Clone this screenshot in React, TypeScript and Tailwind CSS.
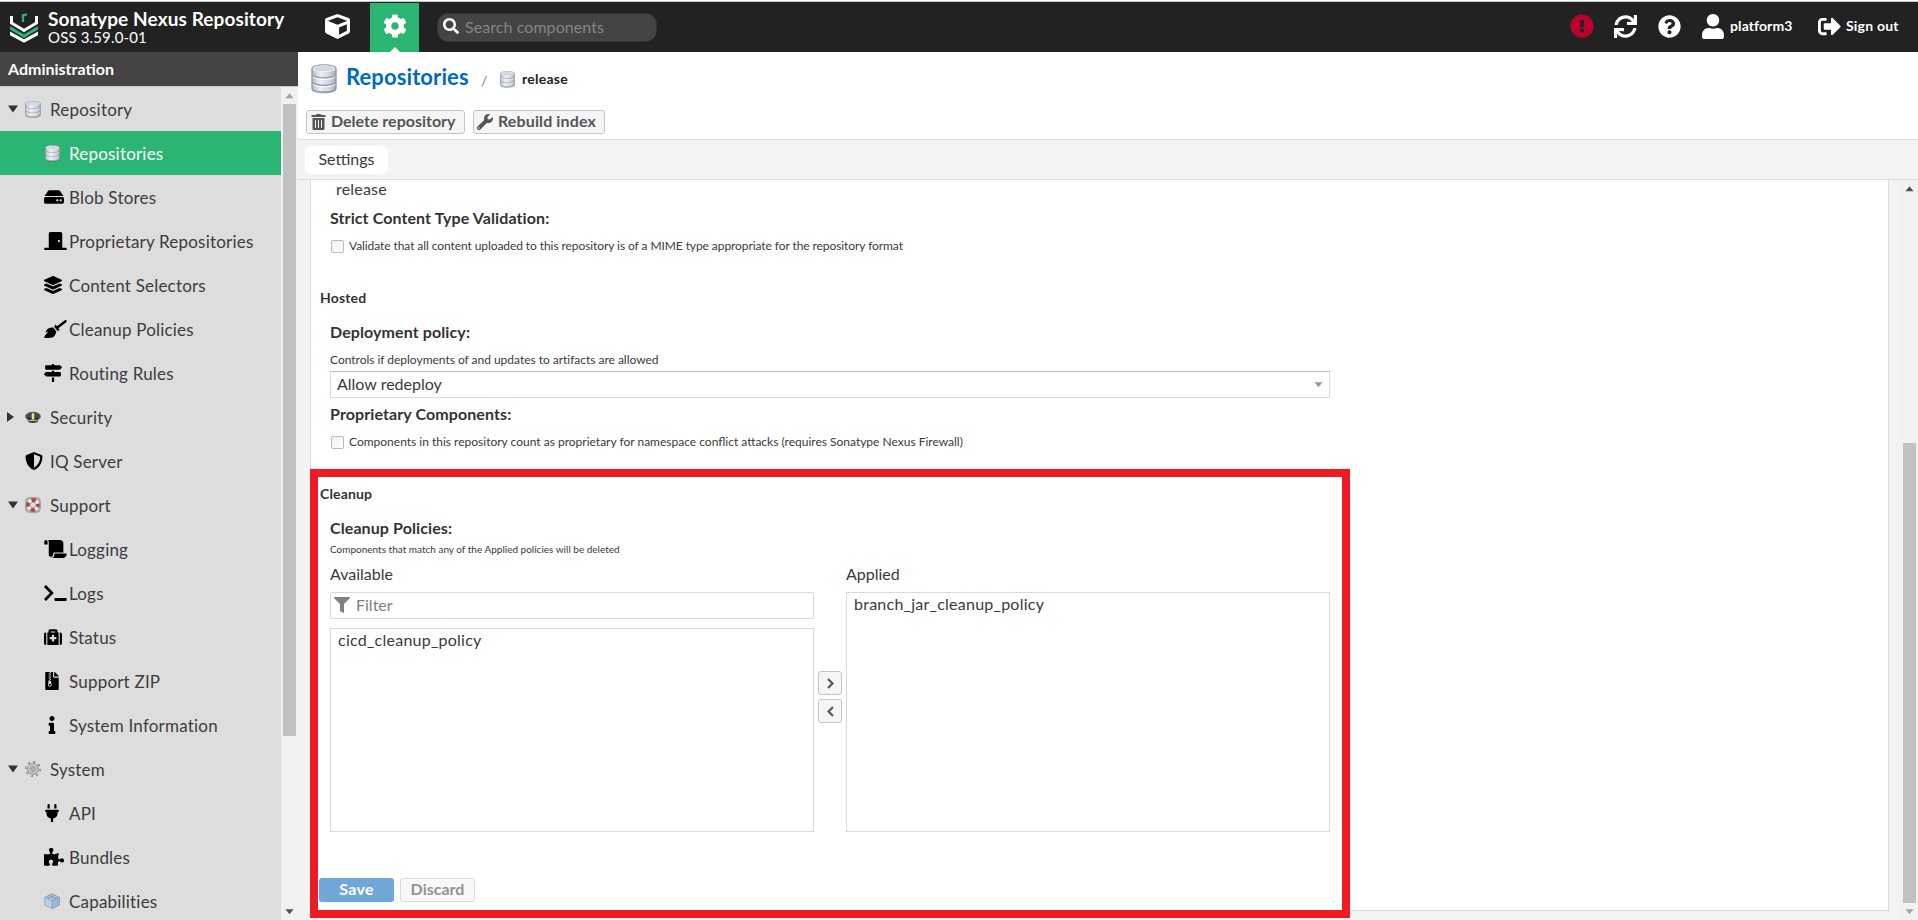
import React from 'react';
import clsx from 'clsx';
import type { IconType } from 'react-icons';
import {
  FaBroom, FaCog, FaCube, FaDoorClosed, FaExclamationCircle, FaFileArchive, FaFilter, FaHdd, FaInfo,
  FaLayerGroup, FaMapSigns, FaMedkit, FaPlug, FaPuzzlePiece, FaQuestionCircle, FaScroll, FaSearch,
  FaShieldAlt, FaSignOutAlt, FaSync, FaTerminal, FaTrashAlt, FaUser, FaWrench,
} from 'react-icons/fa';

function Logo() {
  return (
    <svg viewBox="0 0 28 30" className="h-[30px] w-7 shrink-0" fill="none">
      <path d="M1.500 3v7L14 17.500l12.500-7.500V3" stroke="#fff" strokeWidth="3" />
      <path d="M0 13v3.600L14 25l14-8.400V13L14 21.400z" fill="#2ab573" />
      <path d="M0 18.600v3.600l14 7.600 14-7.600v-3.600l-14 7.600z" fill="#fff" />
      <path d="M13 9V1M13 4c.4-2 2-2.600 4-2.300" stroke="#2ab573" strokeWidth="2.200" />
    </svg>
  );
}

function DatabaseIcon({ className }: { className?: string }) {
  return (
    <svg viewBox="0 0 26 30" className={className} preserveAspectRatio="none">
      <defs>
        <linearGradient id="drum" x1="0" x2="1" y1="0" y2="0">
          <stop offset="0" stopColor="#b4bbc6" />
          <stop offset=".35" stopColor="#eceff4" />
          <stop offset=".75" stopColor="#cdd2db" />
          <stop offset="1" stopColor="#a3aab6" />
        </linearGradient>
      </defs>
      <ellipse cx="13" cy="26.500" rx="12" ry="3" fill="#000" opacity=".25" />
      <path d="M1 4.500C1 2.500 6 1 13 1s12 1.500 12 3.500v20c0 2-5 3.500-12 3.500S1 26.500 1 24.500z" fill="url(#drum)" stroke="#8f97a3" strokeWidth="1.300" />
      <ellipse cx="13" cy="4.700" rx="11" ry="3" fill="#cfd6df" stroke="#f5f7fa" strokeWidth=".8" />
      <path d="M1.500 11c2 2 6 2.800 11.500 2.800S22.500 13 24.500 11M1.500 18.500c2 2 6 2.800 11.500 2.800s9.500-.8 11.500-2.800" fill="none" stroke="#8f97a3" strokeWidth="1.200" />
      <path d="M1.800 12.500c2 2 6 2.800 11.200 2.800s9.200-.8 11.200-2.800M1.800 20c2 2 6 2.800 11.200 2.800s9.200-.8 11.200-2.800" fill="none" stroke="#fff" strokeWidth="1" />
    </svg>
  );
}

function CapIcon() {
  return (
    <svg viewBox="0 0 16 16" className="size-4">
      <path d="M.3 7.500C.8 4.500 4 3 8 3s7.200 1.500 7.700 4.500c0 1-1 2.300-2.200 2.800h-11C1.300 9.800.3 8.500.3 7.500z" fill="#4a4944" stroke="#7c7a72" strokeWidth=".5" />
      <path d="M2.800 8.800h10.400v2.600H2.800z" fill="#2b2a28" />
      <path d="M3.500 10.800h9v1h-9z" fill="#d8c98a" />
      <path d="M2.500 11.500c2.500.8 8.500.8 11 0-.8 1.800-3 2.500-5.500 2.500s-4.700-.7-5.500-2.500z" fill="#3c3b38" />
      <path d="M6.700 5L8 3.800 9.300 5v5.500H6.700z" fill="#f0df9c" />
    </svg>
  );
}

function LifebuoyIcon() {
  return (
    <svg viewBox="0 0 16 16" className="size-4" fill="none">
      <rect x=".8" y=".8" width="14.400" height="14.400" rx="3" fill="#c4c0c0" stroke="#999" strokeWidth="1" />
      <circle cx="8" cy="8" r="5" stroke="#efecec" strokeWidth="4.200" />
      <circle cx="8" cy="8" r="5" stroke="#a84a4a" strokeWidth="3.800" strokeDasharray="4.400 3.454" strokeDashoffset="2.200" />
      <circle cx="8" cy="8" r="7" stroke="#94706f" strokeWidth=".6" />
      <circle cx="8" cy="8" r="2.900" fill="#ddd" stroke="#9a7272" strokeWidth=".5" />
    </svg>
  );
}

function GearIcon() {
  return (
    <svg viewBox="0 0 16 16" className="size-4" fill="none">
      <circle cx="8" cy="8" r="6.700" stroke="#858585" strokeWidth="2.400" strokeDasharray="2.300 2.962" />
      <circle cx="8" cy="8" r="6.300" stroke="#d4d4d4" strokeWidth="1.600" strokeDasharray="1 3.948" strokeDashoffset="-.65" />
      <circle cx="8" cy="8" r="5.300" fill="#d2d2d2" stroke="#858585" strokeWidth=".9" />
      <circle cx="8" cy="8" r="3" fill="#c0c0c0" stroke="#909090" strokeWidth=".8" />
      <circle cx="8" cy="8" r="1.300" fill="#e0e0e0" stroke="#858585" strokeWidth=".8" />
    </svg>
  );
}

function BrickIcon() {
  return (
    <svg viewBox="0 0 16 16" className="size-4" stroke="#7893ad" strokeWidth=".7" strokeLinejoin="round">
      <path d="M.8 4.500L8 1l7.200 3.500V12L8 15.500.8 12z" fill="#bcd2e5" />
      <path d="M.8 4.500L8 8l7.200-3.500L8 1z" fill="#dbe8f3" />
      <path d="M8 8v7.500l7.200-3.500V4.500z" fill="#9dbad4" />
      <path d="M3.700 3.800v1c0 1.200 3.200 1.200 3.200 0v-1zM9.100 3.800v1c0 1.200 3.200 1.200 3.200 0v-1zM6.400 2v1c0 1.200 3.200 1.200 3.200 0V2z" fill="#a9c3da" />
      <ellipse cx="5.300" cy="3.800" rx="1.600" ry=".8" fill="#e6f0f8" />
      <ellipse cx="10.700" cy="3.800" rx="1.600" ry=".8" fill="#e6f0f8" />
      <ellipse cx="8" cy="2.200" rx="1.600" ry=".8" fill="#e6f0f8" />
      <ellipse cx="8" cy="5.600" rx="1.600" ry=".8" fill="#e6f0f8" />
    </svg>
  );
}

function Triangle({ className, d }: { className?: string; d: string }) {
  return (
    <svg viewBox="0 0 10 10" className={className} fill="currentColor">
      <path d={d} />
    </svg>
  );
}

const UP = 'M5 2.500L9.500 8h-9z';
const DOWN = 'M.5 2.500h9L5 8z';

type Node = { label: string; icon: React.ReactNode; level: 0 | 1; open?: boolean; active?: boolean };

const fa = (Icon: IconType, size = 'w-[18px]') => <Icon className={clsx('h-[18px] shrink-0 text-black', size)} />;

const nodes: Node[] = [
  { label: 'Repository', icon: <DatabaseIcon className="h-[17px] w-4" />, level: 0, open: true },
  { label: 'Repositories', icon: <DatabaseIcon className="ml-px h-[17px] w-[15px]" />, level: 1, active: true },
  { label: 'Blob Stores', icon: fa(FaHdd, 'w-[20px]'), level: 1 },
  { label: 'Proprietary Repositories', icon: fa(FaDoorClosed, 'w-[23px]'), level: 1 },
  { label: 'Content Selectors', icon: fa(FaLayerGroup), level: 1 },
  { label: 'Cleanup Policies', icon: fa(FaBroom, 'w-[23px]'), level: 1 },
  { label: 'Routing Rules', icon: fa(FaMapSigns), level: 1 },
  { label: 'Security', icon: <CapIcon />, level: 0, open: false },
  { label: 'IQ Server', icon: fa(FaShieldAlt), level: 0 },
  { label: 'Support', icon: <LifebuoyIcon />, level: 0, open: true },
  { label: 'Logging', icon: fa(FaScroll, 'w-[23px]'), level: 1 },
  { label: 'Logs', icon: fa(FaTerminal, 'w-[23px]'), level: 1 },
  { label: 'Status', icon: fa(FaMedkit), level: 1 },
  { label: 'Support ZIP', icon: fa(FaFileArchive, 'ml-px w-[14px]'), level: 1 },
  { label: 'System Information', icon: fa(FaInfo, 'ml-1 w-2'), level: 1 },
  { label: 'System', icon: <GearIcon />, level: 0, open: true },
  { label: 'API', icon: fa(FaPlug, 'ml-px w-[14px]'), level: 1 },
  { label: 'Bundles', icon: fa(FaPuzzlePiece, 'w-[20px]'), level: 1 },
  { label: 'Capabilities', icon: <BrickIcon />, level: 1 },
];

function TreeRow({ node }: { node: Node }) {
  return (
    <div
      className={clsx(
        'flex h-11 shrink-0 items-center text-[17px] tracking-[0.2px] whitespace-nowrap',
        node.active ? 'bg-[#2ab573] text-white' : 'text-[#3c3c3c]',
      )}
    >
      {node.level === 0 ? (
        <>
          <span className="w-6 shrink-0 pl-[7px]">
            {node.open === true && <Triangle d="M0 1.500h10L5 8.500z" className="ml-px size-[10px] text-[#333]" />}
            {node.open === false && <Triangle d="M0 0l7 5-7 5z" className="size-[10px] text-[#333]" />}
          </span>
          <span className="flex w-[26px] shrink-0 pl-px">{node.icon}</span>
        </>
      ) : (
        <span className="ml-11 flex w-[25px] shrink-0">{node.icon}</span>
      )}
      <span className="pt-px">{node.label}</span>
    </div>
  );
}

function Sidebar() {
  return (
    <aside className="flex w-[298px] shrink-0 flex-col bg-[#ddd]">
      <div className="flex h-[34px] shrink-0 items-center bg-[#444] pl-2 text-base font-bold text-white">Administration</div>
      <div className="flex min-h-0 flex-1 border-t border-[#ccc]">
        <nav className="flex w-[281px] flex-col overflow-hidden">
          {nodes.map((node) => <TreeRow key={node.label} node={node} />)}
        </nav>
        <div className="flex w-[17px] flex-col bg-[#f1f1f1]">
          <Triangle d={UP} className="mx-auto mt-1 size-[9px] text-[#a3a3a3]" />
          <div className="mt-1 ml-[2px] h-[632px] w-[13px] bg-[#c1c1c1]" />
          <Triangle d={DOWN} className="mx-auto mt-auto mb-1 size-[9px] text-[#505050]" />
        </div>
      </div>
    </aside>
  );
}

function Header() {
  return (
    <header className="flex h-[50px] shrink-0 items-center bg-[#222] text-white">
      <div className="flex w-[370px] items-center">
        <div className="ml-[10px] flex w-[38px] pt-[2px]"><Logo /></div>
        <div className="w-[277px] whitespace-nowrap">
          <div className="text-[19px] leading-[20px] font-bold tracking-[0.1px]">Sonatype Nexus Repository</div>
          <div className="text-[15px] leading-[16px] tracking-[0.15px]">OSS 3.59.0-01</div>
        </div>
        <FaCube className="mb-[2px] size-[25px]" />
      </div>
      <div className="relative flex h-[49px] w-[49px] items-center justify-center self-end bg-[#2ab573]">
        <FaCog className="mb-[3px] size-[24px]" />
        <svg viewBox="0 0 10 5" className="absolute bottom-0 h-[5px] w-[10px]"><path d="M5 0l5 5H0z" fill="#fff" /></svg>
      </div>
      <div className="ml-[18px] flex h-[29px] w-[220px] items-center rounded-[11px] border border-[#333] bg-[#444] pl-[5px]">
        <FaSearch className="mb-[2px] size-4" />
        <span className="ml-[6px] pb-px text-base tracking-[0.07px] text-[#848484]">Search components</span>
      </div>
      <div className="mr-[19px] ml-auto flex items-center pb-[2px] text-sm font-bold">
        <FaExclamationCircle className="size-[24px] text-[#bc012f]" />
        <FaSync className="ml-5 size-[23px]" />
        <FaQuestionCircle className="ml-[21px] size-[23px]" />
        <FaUser className="ml-[20px] h-[25px] w-[24px]" />
        <span className="ml-[5px] w-[88px] tracking-[0.1px]">platform3</span>
        <FaSignOutAlt className="size-[23px]" />
        <span className="ml-[5px] w-[53px] tracking-[0.2px] whitespace-nowrap">Sign out</span>
      </div>
    </header>
  );
}

function ToolButton({ icon, className, children }: { icon: React.ReactNode; className: string; children: React.ReactNode }) {
  return (
    <button
      className={clsx(
        'flex h-6 items-center rounded-[3px] border border-[#c5c5c5] bg-[#f5f5f5] text-base leading-none font-bold whitespace-nowrap text-[#555]',
        className,
      )}
    >
      {icon}
      <span className="pb-[2px]">{children}</span>
    </button>
  );
}

function CheckRow({ className, children }: { className?: string; children: React.ReactNode }) {
  return (
    <div className="mt-3 flex h-[14px] items-center pl-px">
      <span className="mr-[5px] size-[13px] shrink-0 rounded-[2px] border border-[#bbb] bg-linear-to-br from-[#f0f0f0] to-white" />
      <span className={clsx('text-xs whitespace-nowrap', className)}>{children}</span>
    </div>
  );
}

const label = 'text-base leading-[18px] font-bold tracking-[0.1px] text-[#333]';
const section = '-ml-[10px] text-sm leading-5 font-bold tracking-[0.15px] text-[#333]';

function SettingsForm() {
  return (
    <div className="flex h-[731px] w-[1579px] flex-col border-x border-b border-[#dcdcdc] bg-white pl-[19px] text-[#3a3a3a]">
      <div className="pl-[6px] text-base leading-[18px] tracking-[0.2px]">release</div>
      <div className={clsx(label, 'mt-[11px]')}>Strict Content Type Validation:</div>
      <CheckRow className="tracking-[-0.08px]">
        Validate that all content uploaded to this repository is of a MIME type appropriate for the repository format
      </CheckRow>

      <div className={clsx(section, 'mt-[35px]')}>Hosted</div>
      <div className={clsx(label, 'mt-[15px]')}>Deployment policy:</div>
      <div className="mt-[11px] text-xs leading-4 tracking-[-0.02px]">Controls if deployments of and updates to artifacts are allowed</div>
      <div className="mt-[3px] flex h-[27px] w-[1000px] items-center justify-between border border-t-[#b8b8b8] border-[#d9d9d9] pr-[6px] pb-px pl-[6px] text-base">
        Allow redeploy
        <Triangle d={DOWN} className="size-[9px] text-[#999]" />
      </div>
      <div className={clsx(label, 'mt-[7px]')}>Proprietary Components:</div>
      <CheckRow>
        Components in this repository count as proprietary for namespace conflict attacks (requires Sonatype Nexus Firewall)
      </CheckRow>

      <div className={clsx(section, 'mt-[35px]')}>Cleanup</div>
      <div className={clsx(label, 'mt-[15px]')}>Cleanup Policies:</div>
      <div className="mt-[5px] text-[10px] leading-[14px]">Components that match any of the Applied policies will be deleted</div>
      <div className="mt-2 flex h-[268px] w-[1000px] text-base leading-5">
        <div className="flex w-[484px] flex-col">
          <div>Available</div>
          <div className="mt-2 flex h-[27px] items-center rounded-[2px] border border-[#d9d9d9] pb-px pl-[3px] text-[#808080]">
            <FaFilter className="mr-[6px] size-4" />
            Filter
          </div>
          <div className="mt-[9px] flex-1 border border-[#d9d9d9] pt-px pl-[7px] tracking-[0.25px]">cicd_cleanup_policy</div>
        </div>
        <div className="flex w-8 flex-col items-center gap-1 pt-[107px]">
          {['M1 1l4.500 4.500L1 10', 'M6 1L1.500 5.500 6 10'].map((d) => (
            <button key={d} className="flex h-6 w-6 items-center justify-center rounded-[3px] border border-[#c5c5c5] bg-[#f5f5f5]">
              <svg viewBox="0 0 7 11" className="h-[11px] w-[7px]" fill="none" stroke="#555" strokeWidth="2.200"><path d={d} /></svg>
            </button>
          ))}
        </div>
        <div className="flex w-[484px] flex-col">
          <div>Applied</div>
          <div className="mt-2 flex-1 border border-[#d9d9d9] pt-px pl-[7px] tracking-[0.25px]">branch_jar_cleanup_policy</div>
        </div>
      </div>

      <div className="mt-[46px] -ml-[11px] flex gap-[6px] text-base leading-none font-bold">
        <button className="h-6 w-[75px] rounded-[3px] bg-[#71a6d9] pb-[2px] tracking-[0.3px] text-white">Save</button>
        <button className="h-6 w-[75px] rounded-[3px] border border-[#dcdcdc] bg-[#f8f8f8] pb-[2px] text-[#939393]">Discard</button>
      </div>
    </div>
  );
}

function RepositoryDetail() {
  return (
    <main className="flex flex-1 flex-col bg-white">
      <div className="h-[88px] shrink-0 border-b border-[#dcdcdc]">
        <div className="flex h-[58px] items-center pl-[13px]">
          <DatabaseIcon className="-mt-1 h-[30px] w-[26px]" />
          <span className="-mt-[9px] ml-[9px] w-[135px] text-[22px] font-bold tracking-[0.1px] text-[#006bbf]">Repositories</span>
          <span className="-mt-px w-[19px] text-sm text-[#777]">/</span>
          <DatabaseIcon className="-mt-1 h-[17px] w-[15px]" />
          <span className="-mt-[4px] ml-[7px] text-sm font-bold tracking-[0.25px] text-[#222]">release</span>
        </div>
        <div className="flex gap-2 pl-2">
          <ToolButton className="w-[159px] pl-1" icon={<FaTrashAlt className="mr-[5px] h-4 w-[15px]" />}>Delete repository</ToolButton>
          <ToolButton className="w-[132px] pl-[3px] tracking-[0.12px]" icon={<FaWrench className="mr-[5px] size-4" />}>Rebuild index</ToolButton>
        </div>
      </div>
      <div className="flex h-10 shrink-0 items-center border-b border-[#dcdcdc] bg-[#f3f3f3] pl-[7px]">
        <div className="flex h-7 w-[83px] items-center justify-center rounded-[6px] bg-white pb-px text-base text-[#3a3a3a]">Settings</div>
      </div>
      <div className="flex min-h-0 flex-1 bg-[#f3f3f3] pl-3">
        <SettingsForm />
        <div className="ml-auto flex w-[17px] flex-col bg-[#f1f1f1]">
          <Triangle d={UP} className="mx-auto mt-1 size-[9px] text-[#505050]" />
          <div className="mt-auto ml-[2px] h-[460px] w-[13px] bg-[#c1c1c1]" />
          <Triangle d={DOWN} className="mx-auto mt-1 mb-1 size-[9px] text-[#a3a3a3]" />
        </div>
      </div>
    </main>
  );
}

export default function App() {
  return (
    <div className="relative flex h-[920px] w-[1918px] flex-col overflow-hidden bg-white pt-px font-['Lato','Liberation_Sans',sans-serif]">
      <div className="h-px shrink-0 bg-[#c8c8c8]" />
      <Header />
      <div className="flex min-h-0 flex-1">
        <Sidebar />
        <RepositoryDetail />
      </div>
      {/* Highlight frame over the cleanup section */}
      <div className="pointer-events-none absolute top-[469px] left-[310px] h-[449px] w-[1040px] border-8 border-[#ed1c24]" />
    </div>
  );
}
